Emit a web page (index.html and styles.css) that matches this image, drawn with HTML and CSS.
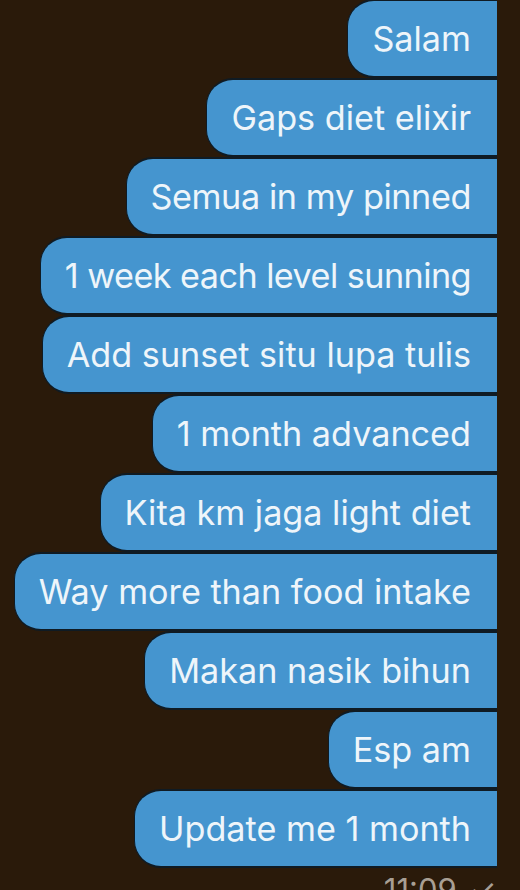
FILE: index.html
```html
<!DOCTYPE html>
<html>
<head>
<meta charset="utf-8">
<link rel="stylesheet" href="styles.css">
</head>
<body>
<div class="chat">
  <div class="bubble">Salam</div>
  <div class="bubble">Gaps diet elixir</div>
  <div class="bubble tight">Semua in my pinned</div>
  <div class="bubble tighter">1 week each level sunning</div>
  <div class="bubble">Add sunset situ lupa tulis</div>
  <div class="bubble">1 month advanced</div>
  <div class="bubble">Kita km jaga light diet</div>
  <div class="bubble">Way more than food intake</div>
  <div class="bubble">Makan nasik bihun</div>
  <div class="bubble">Esp am</div>
  <div class="bubble">Update me 1 month</div>
  <div class="meta">11:09 <span class="check">✓</span></div>
</div>
</body>
</html>
```
FILE: styles.css
```css
html, body {
  margin: 0;
  padding: 0;
  background: #2a1a0a;
  height: 890px;
  overflow: hidden;
}
.chat {
  display: flex;
  flex-direction: column;
  align-items: flex-end;
  padding: 0 23px 0 0;
  margin-top: -1px;
  font-family: Inter, Roboto, sans-serif;
}
.bubble {
  box-sizing: border-box;
  height: 79px;
  display: flex;
  align-items: center;
  padding: 0 26px 0 24px;
  background: #4595cf;
  color: #eef5fa;
  font-size: 34.2px;
  border-top: 2px solid #0f1b24;
  border-bottom: 2px solid #0f1b24;
  border-left: 1px solid #0f1b24;
  border-radius: 27px 0 0 27px;
  white-space: nowrap;
}
.bubble.tight {
  letter-spacing: -0.4px;
}
.bubble.tighter {
  letter-spacing: -0.55px;
}
.meta {
  margin-top: 7px;
  color: #a89f94;
  font-size: 31px;
  line-height: 30px;
  padding-right: 1px;
}
.check {
  margin-left: 4px;
  font-size: 30px;
}
```
